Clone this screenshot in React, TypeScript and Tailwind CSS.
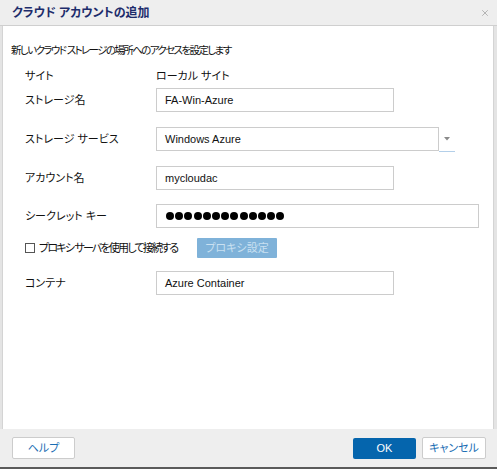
import { X } from "lucide-react";

const jp = "font-['Liberation_Sans','Noto_Sans_CJK_JP',sans-serif] [font-feature-settings:'palt']";

function TextBox({ value, width = "w-[238px]" }: { value: string; width?: string }) {
  return (
    <div className={`${width} h-[24px] border border-[#cccccc] bg-white flex items-center pl-[8px] text-[11px] text-[#111]`}>
      {value}
    </div>
  );
}

function Row({ label, children, className = "" }: { label: string; children: React.ReactNode; className?: string }) {
  return (
    <div className={`flex items-center ${className}`}>
      <div className="w-[131px] shrink-0 text-[11px] text-[#111] whitespace-nowrap">{label}</div>
      {children}
    </div>
  );
}

export default function App() {
  return (
    <div className={`${jp} w-[497px] h-[469px] flex flex-col bg-[#ececec] border-b-2 border-[#5a5a5a] overflow-hidden`}>
      {/* Title bar */}
      <div className="h-[26px] shrink-0 flex items-center justify-between pl-[12px] pr-[7px] border-b border-[#cfcfcf] bg-[#eeeeee]">
        <span className="text-[12px] font-bold text-[#1d2c6b]">クラウド アカウントの追加</span>
        <X className="w-[10px] h-[10px] text-[#a0a0a0]" strokeWidth={1.8} />
      </div>

      {/* Body */}
      <div className="flex-1 flex">
        <div className="w-[3px] bg-[#e4e4e4] border-r border-[#d4d4d4]" />
        <div className="flex-1 bg-white pl-[8px] pt-[17px]">
          <div className="h-[16px] flex items-center text-[10.5px] text-[#111] tracking-[-1.6px] whitespace-nowrap">
            新しいクラウド&nbsp;ストレージの場所へのアクセスを設定します
          </div>

          <div className="pl-[14px]">
            <Row label="サイト" className="mt-[9px] h-[16px]">
              <span className="text-[11px] text-[#111]">ローカル サイト</span>
            </Row>

            <Row label="ストレージ名" className="mt-[4px]">
              <TextBox value="FA-Win-Azure" />
            </Row>

            <Row label="ストレージ サービス" className="mt-[15px]">
              <div className="flex">
                <div className="w-[283px] h-[24px] border border-[#cccccc] flex items-center pl-[8px] text-[11px] text-[#111]">
                  Windows Azure
                </div>
                <div className="w-[16px] h-[25px] border-b border-[#b3cfe9] flex items-center justify-center">
                  <svg width="6" height="4" viewBox="0 0 6 4">
                    <path d="M0 0 L6 0 L3 3.5 Z" fill="#8a8a8a" />
                  </svg>
                </div>
              </div>
            </Row>

            <Row label="アカウント名" className="mt-[14px]">
              <TextBox value="mycloudac" />
            </Row>

            <Row label="シークレット キー" className="mt-[14px]">
              <div className="w-[323px] h-[24px] border border-[#cccccc] flex items-center gap-[1.2px] pl-[9px]">
                {Array.from({ length: 13 }).map((_, i) => (
                  <span key={i} className="w-[8px] h-[8px] rounded-full bg-black" />
                ))}
              </div>
            </Row>

            <div className="mt-[10px] h-[20px] flex items-center">
              <div className="w-[10px] h-[10px] border border-[#555] bg-white" />
              <div className="ml-[4px] w-[158px] shrink-0 text-[11px] text-[#111] whitespace-nowrap tracking-[-1.8px]">
                プロキシ&nbsp;サーバを使用して接続する
              </div>
              <button className="w-[80px] h-[20px] bg-[#7fb2d9] rounded-[1px] text-[11px] text-[#c9e0f1]">
                プロキシ設定
              </button>
            </div>

            <Row label="コンテナ" className="mt-[13px]">
              <TextBox value="Azure Container" />
            </Row>
          </div>
        </div>
        <div className="w-[4px] bg-[#e4e4e4] border-l border-[#d4d4d4]" />
      </div>

      {/* Footer */}
      <div className="h-[38px] shrink-0 flex items-center pl-[12px] pr-[11px] bg-[#eeeeee]">
        <button className="w-[63px] h-[22px] bg-white border border-[#cccccc] rounded-[2px] text-[11px] text-[#1a6db3]">
          ヘルプ
        </button>
        <div className="flex-1" />
        <button className="w-[63px] h-[21px] bg-[#0565ad] rounded-[2px] text-[11px] text-white">
          OK
        </button>
        <button className="ml-[6px] w-[64px] h-[22px] bg-white border border-[#cccccc] rounded-[2px] text-[11px] text-[#1a6db3]">
          キャンセル
        </button>
      </div>
    </div>
  );
}
